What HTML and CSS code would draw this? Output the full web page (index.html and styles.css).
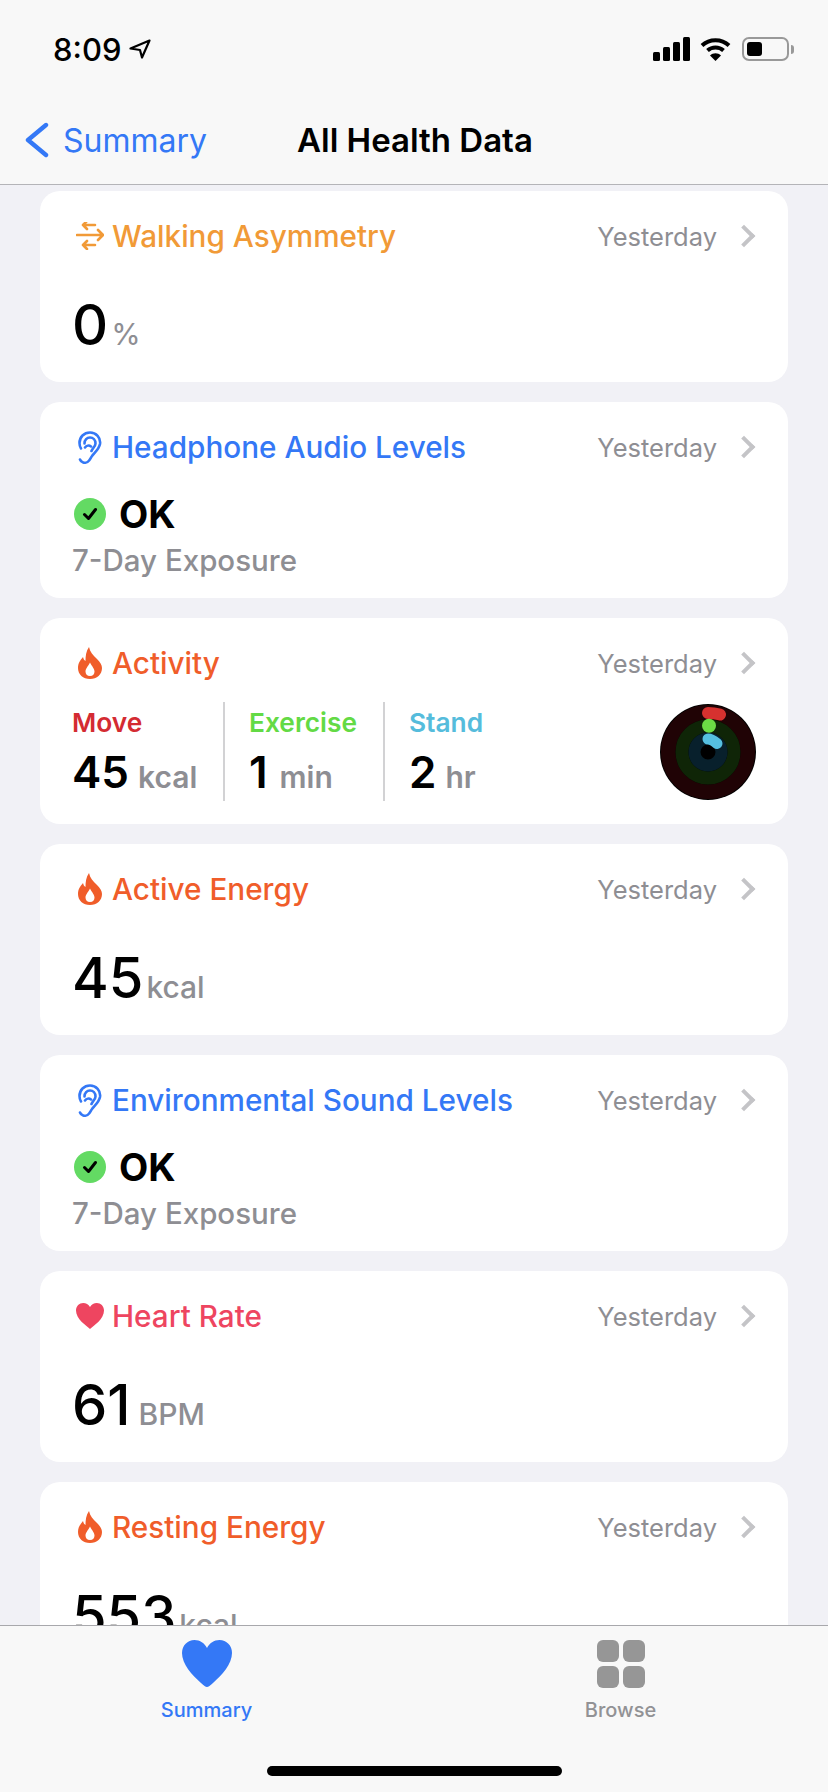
FILE: index.html
```html
<!DOCTYPE html>
<html lang="en">
<head>
    <meta charset="UTF-8">
    <meta name="viewport" content="width=device-width, initial-scale=1.0">
    <title>All Health Data</title>
    <link rel="stylesheet" href="styles.css">
</head>
<body>
    <svg class="defs" width="0" height="0">
        <symbol id="flame" viewBox="0 0 24 32">
            <path fill="currentColor" fill-rule="evenodd" d="M11 0C12 5 15 8 19 12C22 15 24 18 24 21C24 27.5 19 32 12 32C5 32 0 27.5 0 21C0 16 2.5 13 5 10C5.5 12 6 13 7.5 14C7.5 9 8 4 11 0ZM12 29C15 29 16.5 27 16.5 24.5C16.5 21.5 14 19.5 12 15.5C10 19.5 7.5 21.5 7.5 24.5C7.5 27 9 29 12 29Z"/>
        </symbol>
        <symbol id="ear" viewBox="0 0 24 33">
            <path fill="none" stroke="currentColor" stroke-width="2.6" stroke-linecap="round" d="M2 28.5C3 31.5 7 32.5 9.5 31C12 29.5 12.5 27 14 25C16 22 21 18.5 22 13C23 6.5 18 1.5 12 1.5C6 1.5 1.5 6 1.5 12C1.5 14 2 16 3 17.5M6.5 12.5C6.5 9 9 6.5 12 6.5C15 6.5 17.5 9 17.5 12.5C17.5 15.5 14.5 17 13.5 20M7 16.5C8.5 14.5 11 14 13 15.5"/>
        </symbol>
        <symbol id="check" viewBox="0 0 32 32">
            <circle cx="16" cy="16" r="16" fill="#63da63"/>
            <path fill="none" stroke="#000" stroke-width="3" stroke-linecap="round" stroke-linejoin="round" d="M10.5 16.5L14.5 20.5L21.5 11.5"/>
        </symbol>
    </svg>

    <div class="topbar">
        <div class="status">
            <div class="clock">8:09
                <svg class="loc" width="22" height="20" viewBox="0 0 22 20"><path fill="none" stroke="#000" stroke-width="2.2" stroke-linejoin="round" d="M20.5 1.5L1.5 9.5L11 11L13 18.5Z"/></svg>
            </div>
            <div class="status-icons">
                <svg width="37" height="24" viewBox="0 0 37 24"><g fill="#000"><rect x="0" y="15" width="7" height="9" rx="1.5"/><rect x="10" y="10" width="7" height="14" rx="1.5"/><rect x="20" y="5" width="7" height="19" rx="1.5"/><rect x="30" y="0" width="7" height="24" rx="1.5"/></g></svg>
                <svg width="31" height="24" viewBox="0 0 31 24"><path fill="none" stroke="#000" stroke-width="4" d="M2 8.5C9.5 1.5 21.5 1.5 29 8.5M7.5 13.5C12 9.5 19 9.5 23.5 13.5"/><path fill="#000" d="M15.5 24L10 18.5C13 15.5 18 15.5 21 18.5Z"/></svg>
                <div class="battery"><div class="battery-level"></div></div>
                <div class="battery-cap"></div>
            </div>
        </div>
        <div class="nav">
            <a class="back">
                <svg width="24" height="36" viewBox="0 0 24 36"><path fill="none" stroke="#3478f6" stroke-width="4.4" stroke-linecap="round" stroke-linejoin="round" d="M21 3L3 18L21 33"/></svg>
                Summary
            </a>
            <div class="nav-title">All Health Data</div>
        </div>
    </div>

    <div class="content">
        <div class="card">
            <div class="card-head">
                <div class="card-title orange">
                    <svg class="icon" width="28" height="28" viewBox="0 0 28 28"><path fill="none" stroke="currentColor" stroke-width="2.6" stroke-linecap="round" stroke-linejoin="round" d="M7 3H19M11 -1L7 3L11 7M1 13H27M22 8L27 13L22 18M7 23H19M11 19L7 23L11 27"/></svg>
                    Walking Asymmetry
                </div>
                <div class="card-date">Yesterday <span class="chev"></span></div>
            </div>
            <div class="value">0<span class="unit light">%</span></div>
        </div>

        <div class="card">
            <div class="card-head">
                <div class="card-title blue"><svg class="icon ear"><use href="#ear"/></svg>Headphone Audio Levels</div>
                <div class="card-date">Yesterday <span class="chev"></span></div>
            </div>
            <div class="ok"><svg class="ok-icon"><use href="#check"/></svg>OK</div>
            <div class="note">7-Day Exposure</div>
        </div>

        <div class="card card-activity">
            <div class="card-head">
                <div class="card-title fire"><svg class="icon flame"><use href="#flame"/></svg>Activity</div>
                <div class="card-date">Yesterday <span class="chev"></span></div>
            </div>
            <div class="rings-row">
                <div class="metric">
                    <div class="metric-label move">Move</div>
                    <div class="metric-value">45<span>kcal</span></div>
                </div>
                <div class="metric">
                    <div class="metric-label exercise">Exercise</div>
                    <div class="metric-value">1<span class="after-one">min</span></div>
                </div>
                <div class="metric">
                    <div class="metric-label stand">Stand</div>
                    <div class="metric-value">2<span>hr</span></div>
                </div>
                <svg class="rings" width="96" height="96" viewBox="0 0 96 96">
                    <circle cx="48" cy="48" r="48" fill="#000"/>
                    <circle cx="48" cy="48" r="39.75" fill="none" stroke="#200305" stroke-width="14.5"/>
                    <circle cx="48" cy="48" r="26" fill="none" stroke="#0f2507" stroke-width="13"/>
                    <circle cx="48" cy="48" r="13.5" fill="none" stroke="#08202c" stroke-width="12"/>
                    <path fill="none" stroke="#d6312f" stroke-width="12" stroke-linecap="round" d="M48 9C52 9 56 9.5 60 10.5"/>
                    <circle cx="49" cy="21.7" r="7" fill="#6bdb45"/>
                    <path fill="none" stroke="#55bfe0" stroke-width="11" stroke-linecap="round" d="M48 35C51 35 54 37 57 39.5"/>
                </svg>
            </div>
        </div>

        <div class="card">
            <div class="card-head">
                <div class="card-title fire"><svg class="icon flame"><use href="#flame"/></svg>Active Energy</div>
                <div class="card-date">Yesterday <span class="chev"></span></div>
            </div>
            <div class="value">45<span class="unit">kcal</span></div>
        </div>

        <div class="card">
            <div class="card-head">
                <div class="card-title blue"><svg class="icon ear"><use href="#ear"/></svg>Environmental Sound Levels</div>
                <div class="card-date">Yesterday <span class="chev"></span></div>
            </div>
            <div class="ok"><svg class="ok-icon"><use href="#check"/></svg>OK</div>
            <div class="note">7-Day Exposure</div>
        </div>

        <div class="card">
            <div class="card-head">
                <div class="card-title pink">
                    <svg class="icon" width="28" height="26" viewBox="0 0 28 26"><path fill="currentColor" d="M14 26C10 22.5 0 16 0 7.5C0 3 3.3 0 7.2 0C10 0 12.5 1.5 14 4C15.5 1.5 18 0 20.8 0C24.7 0 28 3 28 7.5C28 16 18 22.5 14 26Z"/></svg>
                    Heart Rate
                </div>
                <div class="card-date">Yesterday <span class="chev"></span></div>
            </div>
            <div class="value">61<span class="unit bpm">BPM</span></div>
        </div>

        <div class="card">
            <div class="card-head">
                <div class="card-title fire"><svg class="icon flame"><use href="#flame"/></svg>Resting Energy</div>
                <div class="card-date">Yesterday <span class="chev"></span></div>
            </div>
            <div class="value">553<span class="unit">kcal</span></div>
        </div>
    </div>

    <div class="tabbar">
        <div class="tabs">
            <div class="tab active">
                <svg width="50" height="47" viewBox="0 0 50 47"><path fill="#3478f6" d="M25 47C23.5 47 22 45.5 19 43C10 35 0 24 0 13C0 5.5 5.5 0 12.5 0C18 0 22.5 3 25 8C27.5 3 32 0 37.5 0C44.5 0 50 5.5 50 13C50 24 40 35 31 43C28 45.5 26.5 47 25 47Z"/></svg>
                <span>Summary</span>
            </div>
            <div class="tab">
                <div class="grid-icon"><i></i><i></i><i></i><i></i></div>
                <span>Browse</span>
            </div>
        </div>
        <div class="home-bar"></div>
    </div>
</body>
</html>
```

FILE: styles.css
```css
* {
    box-sizing: border-box;
}
body {
    font-family: Inter, 'Noto Sans', sans-serif;
    margin: 0;
    height: 100vh;
    display: flex;
    flex-direction: column;
    overflow: hidden;
    background: #f1f1f6;
    color: #000;
}
.defs {
    position: absolute;
}

/* top bars */
.topbar {
    height: 185px;
    flex-shrink: 0;
    background: #f8f8f8;
    border-bottom: 1px solid #b4b4b8;
}
.status {
    display: flex;
    justify-content: space-between;
    align-items: center;
    height: 98px;
    padding: 0 34px 0 53px;
}
.clock {
    display: flex;
    align-items: center;
    gap: 8px;
    font-size: 31px;
    font-weight: 500;
}
.status-icons {
    display: flex;
    align-items: center;
    gap: 10px;
}
.battery {
    width: 47px;
    height: 24px;
    margin-left: 1px;
    padding: 3px;
    border: 2px solid #999;
    border-radius: 7px;
}
.battery-level {
    width: 15px;
    height: 100%;
    background: #000;
    border-radius: 3px;
}
.battery-cap {
    width: 3px;
    height: 9px;
    margin-left: -8px;
    background: #999;
    border-radius: 0 3px 3px 0;
}
.nav {
    display: flex;
    align-items: center;
    height: 84px;
    padding-left: 25px;
}
.back {
    display: flex;
    align-items: center;
    gap: 14px;
    width: 272px;
    font-size: 32px;
    color: #3478f6;
}
.nav-title {
    font-size: 33px;
    font-weight: 600;
}

/* list of cards */
.content {
    flex: 1;
    min-height: 0;
    overflow: hidden;
    display: flex;
    flex-direction: column;
    gap: 20px;
    padding: 6px 40px 0;
}
.card {
    flex-shrink: 0;
    background: #fff;
    border-radius: 20px;
    padding: 28px 33px 27px 32px;
}
.card-head {
    display: flex;
    justify-content: space-between;
    align-items: center;
    height: 34px;
}
.card-title {
    display: flex;
    align-items: center;
    font-size: 29.7px;
    font-weight: 500;
}
.icon {
    flex-shrink: 0;
    margin: 0 8px 0 4px;
}
.flame {
    width: 24px;
    height: 32px;
    margin: 0 10px 0 6px;
}
.ear {
    width: 24px;
    height: 33px;
    margin: 0 10px 0 6px;
}
.orange { color: #f19a37; }
.blue { color: #3478f6; }
.fire { color: #f05d2a; }
.pink { color: #ee4560; }
.card-date {
    display: flex;
    align-items: center;
    gap: 19px;
    font-size: 25.5px;
    color: #8e8e93;
}
.chev {
    width: 16px;
    height: 16px;
    margin-right: 3px;
    border-top: 4px solid #c4c4c7;
    border-right: 4px solid #c4c4c7;
    transform: rotate(45deg);
}
.value {
    margin-top: 42px;
    font-size: 56px;
    font-weight: 500;
    line-height: 60px;
}
.unit {
    margin-left: 3px;
    font-size: 30px;
    font-weight: 500;
    line-height: 1;
    color: #8e8e93;
}
.unit.light {
    font-weight: 400;
}
.unit.bpm {
    margin-left: 8px;
}
.ok {
    display: flex;
    align-items: center;
    gap: 13px;
    margin-top: 28px;
    font-size: 38px;
    font-weight: 700;
    line-height: 44px;
}
.ok-icon {
    width: 32px;
    height: 32px;
    margin-left: 2px;
}
.note {
    margin: 6px 0 -7px;
    font-size: 29.5px;
    font-weight: 500;
    line-height: 36px;
    color: #8e8e93;
}

/* activity card */
.card-activity {
    padding-bottom: 23px;
}
.rings-row {
    display: flex;
    align-items: center;
    margin-top: 22px;
    height: 99px;
}
.metric {
    width: 160px;
    height: 100%;
    padding-left: 24px;
    border-left: 2px solid #d2d2d4;
}
.metric:first-child {
    width: 151px;
    padding-left: 0;
    border-left: none;
}
.metric-label {
    margin-top: 6px;
    font-size: 26.3px;
    font-weight: 600;
    line-height: 30px;
}
.move { color: #d42b32; }
.exercise { color: #63da45; }
.stand { color: #55bcdc; }
.metric-value {
    margin-top: 9px;
    font-size: 44px;
    font-weight: 600;
    line-height: 50px;
}
.metric-value span {
    margin-left: 9px;
    font-size: 30px;
    line-height: 1;
    color: #8e8e93;
}
.metric-value .after-one {
    margin-left: 12px;
}
.rings {
    margin-left: auto;
    margin-right: -1px;
}

/* bottom tabs */
.tabbar {
    position: relative;
    height: 167px;
    flex-shrink: 0;
    background: #f8f8f8;
    border-top: 1px solid #a8a8ac;
}
.tabs {
    display: flex;
    padding: 14px 0 0 0;
}
.tab {
    flex: 1;
    display: flex;
    flex-direction: column;
    align-items: center;
    gap: 11px;
    font-size: 20px;
    font-weight: 500;
    color: #929295;
}
.tab.active {
    color: #3478f6;
}
.tabs .tab:first-child {
    flex: none;
    width: 413px;
}
.tabs .tab:last-child {
    flex: none;
    width: 415px;
}
.grid-icon {
    display: grid;
    grid-template-columns: 22px 22px;
    grid-template-rows: 22px 22px;
    gap: 4px;
    height: 47px;
}
.grid-icon i {
    background: #969696;
    border-radius: 6px;
}
.home-bar {
    position: absolute;
    left: 267px;
    top: 140px;
    width: 295px;
    height: 10px;
    background: #000;
    border-radius: 5px;
}
```
